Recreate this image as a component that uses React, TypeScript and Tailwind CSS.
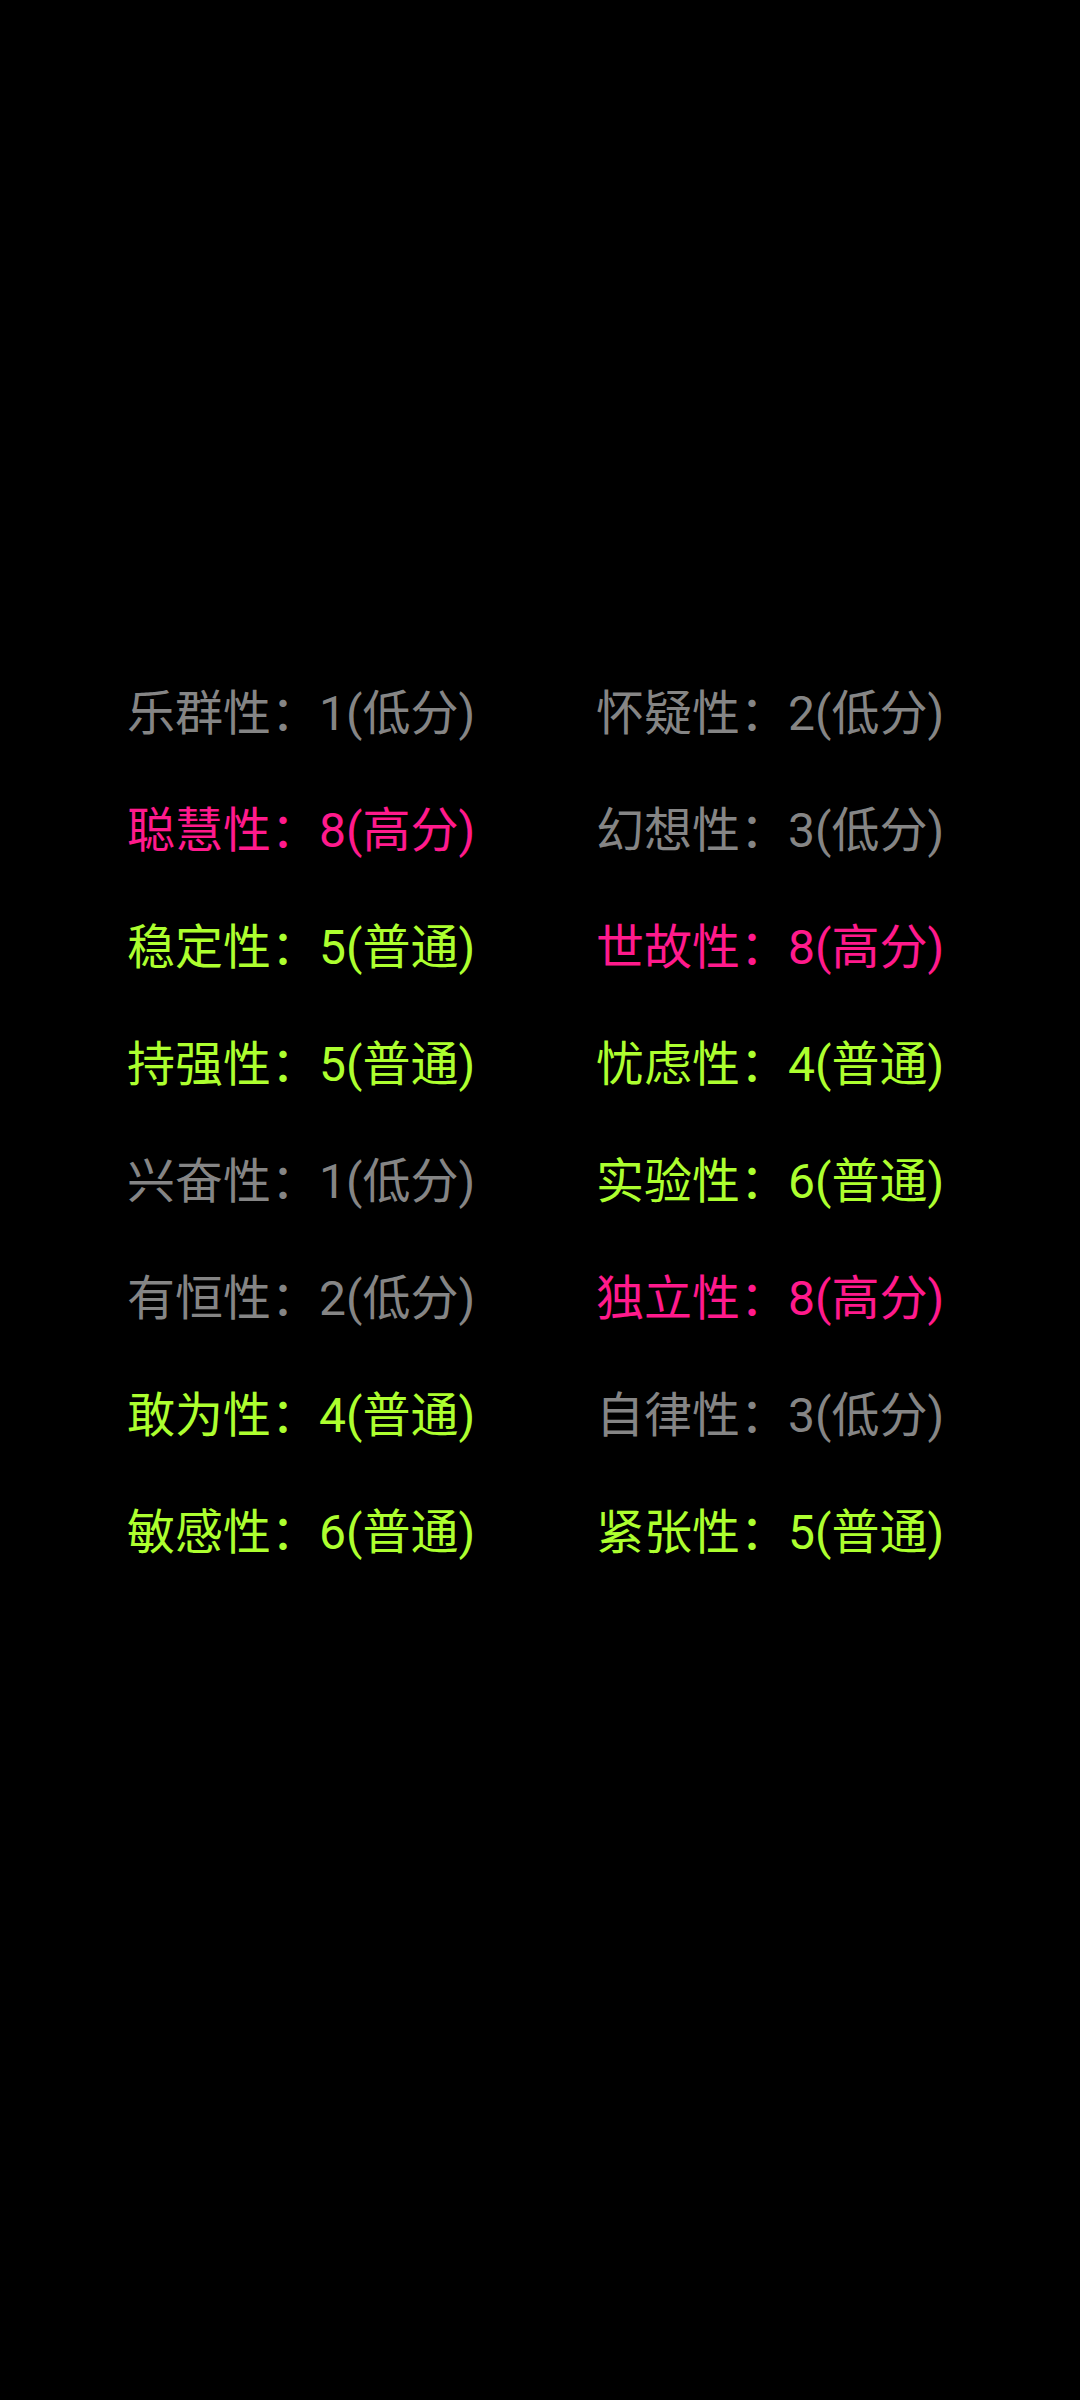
import React from "react";

type Item = { name: string; score: number; level: "低分" | "高分" | "普通" };

const left: Item[] = [
  { name: "乐群性", score: 1, level: "低分" },
  { name: "聪慧性", score: 8, level: "高分" },
  { name: "稳定性", score: 5, level: "普通" },
  { name: "持强性", score: 5, level: "普通" },
  { name: "兴奋性", score: 1, level: "低分" },
  { name: "有恒性", score: 2, level: "低分" },
  { name: "敢为性", score: 4, level: "普通" },
  { name: "敏感性", score: 6, level: "普通" },
];

const right: Item[] = [
  { name: "怀疑性", score: 2, level: "低分" },
  { name: "幻想性", score: 3, level: "低分" },
  { name: "世故性", score: 8, level: "高分" },
  { name: "忧虑性", score: 4, level: "普通" },
  { name: "实验性", score: 6, level: "普通" },
  { name: "独立性", score: 8, level: "高分" },
  { name: "自律性", score: 3, level: "低分" },
  { name: "紧张性", score: 5, level: "普通" },
];

function Cell({ item }: { item: Item }) {
  const cls =
    item.level === "高分"
      ? "text-[#ff1a8c]"
      : item.level === "普通"
      ? "text-[#adff2f]"
      : "text-[#858585]";
  return (
    <div className={`h-[117px] leading-[117px] whitespace-nowrap ${cls}`}>
      {item.name}：{item.score}({item.level})
    </div>
  );
}

export default function App() {
  return (
    <div
      className="w-[1080px] h-[2400px] bg-black pt-[655px] pl-[127px] text-[48px]"
      style={{ fontFamily: '"Roboto", "Noto Sans CJK SC", sans-serif' }}
    >
      <div className="grid grid-cols-[469px_469px]">
        {left.map((l, i) => (
          <React.Fragment key={i}>
            <Cell item={l} />
            <Cell item={right[i]} />
          </React.Fragment>
        ))}
      </div>
    </div>
  );
}
